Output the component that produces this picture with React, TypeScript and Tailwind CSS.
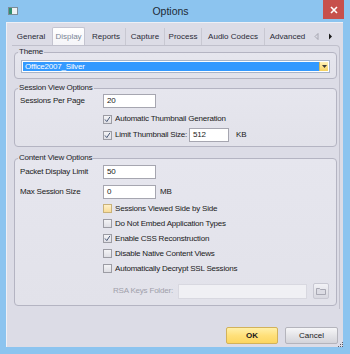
import React from 'react';

const font = { fontFamily: '"Liberation Sans", Arial, sans-serif' };

const tabs = [
  { label: 'General', w: 'w-[38px]' },
  { label: 'Display', w: 'w-[33px]', active: true },
  { label: 'Reports', w: 'w-[38px]' },
  { label: 'Capture', w: 'w-[39px]' },
  { label: 'Process', w: 'w-[37px]' },
  { label: 'Audio Codecs', w: 'w-[63px]' },
  { label: 'Advanced', w: 'w-[46px]' },
];

const CheckBox: React.FC<{ checked?: boolean; warm?: boolean }> = ({ checked, warm }) => (
  <span
    className={`w-[9px] h-[9px] border flex items-center justify-center shrink-0 ${
      warm ? 'border-[#c9b27a] bg-gradient-to-b from-[#fff0c8] to-[#f8dc98]' : 'border-[#9c9ca4] bg-gradient-to-b from-[#f4f4f6] to-[#dedee4]'
    }`}
  >
    {checked && (
      <svg width="7" height="7" viewBox="0 0 7 7">
        <path d="M1 3.5 L2.8 5.6 L6 0.8" fill="none" stroke="#4a5a78" strokeWidth="1" />
      </svg>
    )}
  </span>
);

const TextBox: React.FC<{ value?: string; w: string }> = ({ value, w }) => (
  <div className={`${w} shrink-0 h-[14px] border border-[#a6a6b0] bg-white pl-[3px] flex items-center text-[8px] text-[#1a1a1a]`}>
    {value}
  </div>
);

const Group: React.FC<{ title: string; className?: string; children: React.ReactNode }> = ({ title, className, children }) => (
  <fieldset className={`mx-[2px] border border-[#b4b4c2] rounded-[4px] pl-[5px] pr-[5px] bg-gradient-to-b from-[#e6e6ee] to-[#e2e2ea] ${className ?? ''}`}>
    <legend className="-ml-[2px] px-[1px] text-[8px] leading-[10px] text-[#1e1e2a]">{title}</legend>
    {children}
  </fieldset>
);

const CheckRow: React.FC<{ label: string; checked?: boolean; warm?: boolean }> = ({ label, checked, warm }) => (
  <div className="h-[15px] flex items-center pl-[83px] gap-[3px] text-[8px] text-[#1a1a1a]">
    <CheckBox checked={checked} warm={warm} />
    <span>{label}</span>
  </div>
);

const App: React.FC = () => {
  return (
    <div className="w-[350px] h-[354px] bg-[#8cc4ef] flex flex-col overflow-hidden whitespace-nowrap" style={font}>
      {/* Title bar */}
      <div className="h-[22px] flex items-start relative">
        <div className="ml-[8px] mt-[7px] w-[10px] h-[8px] border border-[#7c8c98] bg-[#eef2f4] flex">
          <div className="w-[3px] h-full bg-[#2f8f6f]" />
        </div>
        <div className="flex-1 text-center text-[10.5px] leading-[22px] text-[#1e2a36]">Options</div>
        <div className="mr-[6px] w-[21px] h-[19px] bg-[#c7504c] flex items-center justify-center">
          <svg width="8" height="8" viewBox="0 0 8 8">
            <path d="M1 1 L7 7 M7 1 L1 7" stroke="white" strokeWidth="1.6" />
          </svg>
        </div>
      </div>

      {/* Client */}
      <div className="ml-[6px] w-[337px] h-[325px] bg-[#dcdce6] border-l border-t border-[#eef0f6] flex flex-col">
        {/* Tabs */}
        <div className="mt-[4px] ml-[5px] h-[18px] flex items-end text-[8px]">
          {tabs.map((t, i) => (
            <div
              key={t.label}
              className={`${t.w} flex items-center justify-center ${
                t.active
                  ? 'h-[18px] mx-[2px] bg-gradient-to-b from-white to-[#f4f4f8] border border-b-0 border-[#c4c4d0] rounded-t-[2px] text-[#7a8696]'
                  : `h-[17px] text-[#2a2a36] ${i > 0 && !tabs[i - 1].active ? 'border-l border-[#c8c8d2]' : ''}`
              }`}
            >
              {t.label}
            </div>
          ))}
          <div className="h-[17px] flex items-center gap-[9px] ml-[4px]">
            <svg width="5" height="7" viewBox="0 0 5 7">
              <path d="M4 0.5 L1 3.5 L4 6.5 Z" fill="none" stroke="#9a9aa4" strokeWidth="0.8" />
            </svg>
            <svg width="5" height="7" viewBox="0 0 5 7">
              <path d="M1 0.5 L4 3.5 L1 6.5 Z" fill="#1a1a1a" />
            </svg>
          </div>
        </div>

        {/* Pane */}
        <div className="ml-[5px] w-[328px] border-t border-r border-[#c0c0cc] rounded-tr-[4px] pt-[1px] pb-[3px] flex flex-col tracking-[-0.2px]">
          <Group title="Theme" className="pt-[3px] pb-[5px]">
            <div className="ml-[1px] w-[309px] h-[13px] border border-[#a8b4c8] bg-white flex p-[1px]">
              <div className="flex-1 bg-[#3399ff] text-white text-[8px] leading-[9px] pl-[2px] flex items-center">
                Office2007_Silver
              </div>
              <div className="w-[9px] bg-gradient-to-b from-[#fff2b8] to-[#f6d25e] border-l border-[#d4b860] flex items-center justify-center">
                <svg width="5" height="3" viewBox="0 0 5 3">
                  <path d="M0 0 L5 0 L2.5 3 Z" fill="#3a3a3a" />
                </svg>
              </div>
            </div>
          </Group>

          <Group title="Session View Options" className="mt-[4px] pt-[1px] pb-[4px] text-[8px] text-[#1a1a1a]">
            <div className="h-[14px] flex items-center">
              <span className="w-[83px] shrink-0">Sessions Per Page</span>
              <TextBox value="20" w="w-[53px]" />
            </div>
            <div className="mt-[4px] h-[14px] flex items-center pl-[83px] gap-[3px]">
              <CheckBox checked />
              <span>Automatic Thumbnail Generation</span>
            </div>
            <div className="mt-[2px] h-[14px] flex items-center pl-[83px]">
              <CheckBox checked />
              <span className="ml-[3px] w-[74px] shrink-0">Limit Thumbnail Size:</span>
              <TextBox value="512" w="w-[40px]" />
              <span className="ml-[7px]">KB</span>
            </div>
          </Group>

          <Group title="Content View Options" className="mt-[6px] pt-[2px] pb-[6px] text-[8px] text-[#1a1a1a]">
            <div className="h-[14px] flex items-center">
              <span className="w-[83px] shrink-0">Packet Display Limit</span>
              <TextBox value="50" w="w-[53px]" />
            </div>
            <div className="mt-[6px] h-[14px] flex items-center">
              <span className="w-[83px] shrink-0">Max Session Size</span>
              <TextBox value="0" w="w-[53px]" />
              <span className="ml-[4px]">MB</span>
            </div>
            <div className="mt-[2px]">
              <CheckRow label="Sessions Viewed Side by Side" warm />
              <CheckRow label="Do Not Embed Application Types" />
              <CheckRow label="Enable CSS Reconstruction" checked />
              <CheckRow label="Disable Native Content Views" />
              <CheckRow label="Automatically Decrypt SSL Sessions" />
            </div>
            <div className="mt-[7px] h-[16px] flex items-center pl-[93px]">
              <span className="w-[65px] shrink-0 text-[#a0a0aa]">RSA Keys Folder:</span>
              <div className="w-[129px] h-[15px] border border-[#d8d8e0] bg-[#f0f0f4]" />
              <div className="ml-[6px] w-[16px] h-[16px] rounded-[2px] border border-[#c8c8d2] bg-gradient-to-b from-[#f2f2f6] to-[#d8d8e0] flex items-center justify-center">
                <svg width="10" height="8" viewBox="0 0 10 8">
                  <path d="M0.5 1.5 H3.5 L4.5 2.5 H9.5 V7.5 H0.5 Z" fill="#dcdce4" stroke="#9a9aa6" strokeWidth="0.8" />
                </svg>
              </div>
            </div>
          </Group>
        </div>

        {/* Buttons */}
        <div className="mt-auto mb-[3px] flex items-center justify-end pr-[5px] gap-[7px] relative">
          <div className="w-[52px] h-[17px] rounded-[2px] border border-[#d2b25a] bg-gradient-to-b from-[#fff0a8] via-[#ffe07a] to-[#fcd660] flex items-center justify-center text-[8px] font-bold text-[#1a1a1a]">
            OK
          </div>
          <div className="w-[53px] h-[17px] rounded-[2px] border border-[#b4b4bc] bg-gradient-to-b from-[#f6f6f8] via-[#e4e4e8] to-[#d4d4da] flex items-center justify-center text-[8px] text-[#1a1a1a]">
            Cancel
          </div>
          <div className="absolute right-[0px] bottom-[-3px] grid grid-cols-3 gap-[1px]">
            <span />
            <span />
            <span className="w-[1px] h-[1px] bg-[#5a5a66]" />
            <span />
            <span className="w-[1px] h-[1px] bg-[#5a5a66]" />
            <span className="w-[1px] h-[1px] bg-[#5a5a66]" />
            <span className="w-[1px] h-[1px] bg-[#5a5a66]" />
            <span className="w-[1px] h-[1px] bg-[#5a5a66]" />
            <span className="w-[1px] h-[1px] bg-[#5a5a66]" />
          </div>
        </div>
      </div>
    </div>
  );
};

export default App;
